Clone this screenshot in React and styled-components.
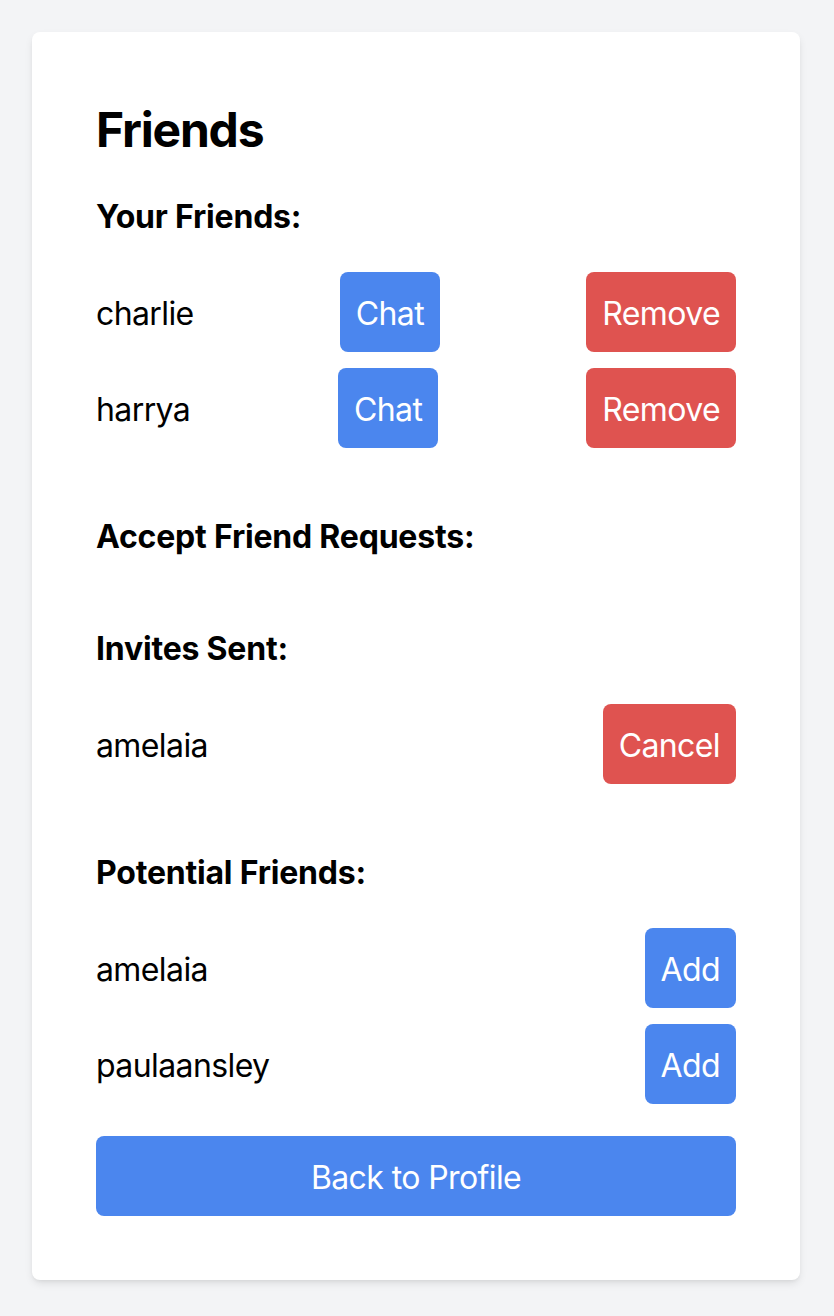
import React from "react";
import styled, { createGlobalStyle } from "styled-components";

const Global = createGlobalStyle`
  html, body { margin: 0; padding: 0; background: #f3f4f6; }
  body { font-family: Inter, "Noto Sans", "Liberation Sans", sans-serif; color: #000; }
  * { box-sizing: border-box; }
`;

const Page = styled.div`
  padding: 32px;
  min-height: 1316px;
  background: #f3f4f6;
`;

const Card = styled.div`
  max-width: 768px;
  background: #fff;
  border-radius: 8px;
  box-shadow: 0 4px 8px -1px rgba(0,0,0,0.1), 0 2px 4px -2px rgba(0,0,0,0.08);
  padding: 64px;
`;

const Title = styled.h1`
  margin: 0 0 30px;
  padding-top: 2px;
  font-size: 48px;
  line-height: 64px;
  font-weight: 700;
  letter-spacing: -1.2px;
`;

const Heading = styled.h2`
  margin: 0 0 31px;
  padding-top: 1px;
  font-size: 32px;
  line-height: 48px;
  font-weight: 700;
  letter-spacing: -0.2px;
`;

const List = styled.ul`
  list-style: none;
  margin: 0 0 ${(p) => (p.$last ? 32 : 64)}px;
  padding: 0;
  display: flex;
  flex-direction: column;
  gap: 16px;
`;

const EmptyGap = styled.div`
  height: 32px;
`;

const Row = styled.li`
  display: flex;
  align-items: center;
  justify-content: space-between;
`;

const Name = styled.span`
  padding-top: 4px;
  font-size: 32px;
  line-height: 48px;
  letter-spacing: -0.6px;
`;

const Button = styled.button`
  border: none;
  border-radius: 8px;
  padding: 18px 16px 14px;
  font-family: inherit;
  font-size: 32px;
  line-height: 48px;
  letter-spacing: -0.6px;
  color: #fff;
  background: ${(p) => (p.$danger ? "#df5350" : "#4b86ee")};
  cursor: pointer;
`;

const WideButton = styled(Button)`
  display: block;
  width: 100%;
`;

export default function App() {
  return (
    <Page>
      <Global />
      <Card>
        <Title>Friends</Title>
        <Heading>Your Friends:</Heading>
        <List>
          {["charlie", "harrya"].map((n) => (
            <Row key={n}>
              <Name>{n}</Name>
              <Button>Chat</Button>
              <Button $danger>Remove</Button>
            </Row>
          ))}
        </List>
        <Heading>Accept Friend Requests:</Heading>
        <EmptyGap />
        <Heading>Invites Sent:</Heading>
        <List>
          <Row>
            <Name>amelaia</Name>
            <Button $danger>Cancel</Button>
          </Row>
        </List>
        <Heading>Potential Friends:</Heading>
        <List $last>
          {["amelaia", "paulaansley"].map((n) => (
            <Row key={n}>
              <Name>{n}</Name>
              <Button>Add</Button>
            </Row>
          ))}
        </List>
        <WideButton>Back to Profile</WideButton>
      </Card>
    </Page>
  );
}
